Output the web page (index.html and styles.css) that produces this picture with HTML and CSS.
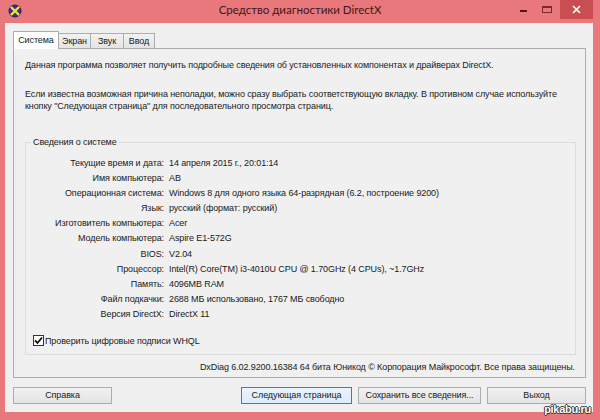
FILE: index.html
```html
<!DOCTYPE html>
<html lang="ru">
<head>
<meta charset="utf-8">
<title>Средство диагностики DirectX</title>
<link rel="stylesheet" href="styles.css">
</head>
<body>
<div class="window">
  <div class="titlebar">
    <svg class="appicon" width="14" height="14" viewBox="0 0 14 14">
      <circle cx="7" cy="7" r="6.5" fill="#2c2466"/>
      <circle cx="7" cy="7" r="5.5" fill="#3b3187"/>
      <path d="M3.5 3.5 L10.5 10.5 M10.5 3.5 L3.5 10.5" stroke="#f2e03a" stroke-width="2.4" stroke-linecap="round"/>
    </svg>
    <div class="title">Средство диагностики DirectX</div>
    <div class="controls">
      <div class="ctl min"><span class="minbar"></span></div>
      <div class="ctl max"><span class="maxbox"></span></div>
      <div class="ctl close">
        <svg width="9" height="9" viewBox="0 0 9 9"><path d="M1 1 L8 8 M8 1 L1 8" stroke="#fff" stroke-width="1.6"/></svg>
      </div>
    </div>
  </div>
  <div class="client">
    <div class="tabs">
      <div class="tab active">Система</div>
      <div class="tab">Экран</div>
      <div class="tab">Звук</div>
      <div class="tab">Ввод</div>
    </div>
    <div class="panel">
      <p class="intro">Данная программа позволяет получить подробные сведения об установленных компонентах и драйверах DirectX.</p>
      <p class="intro2">Если известна возможная причина неполадки, можно сразу выбрать соответствующую вкладку. В противном случае используйте<br>кнопку "Следующая страница" для последовательного просмотра страниц.</p>
      <div class="group">
        <div class="legend">Сведения о системе</div>
        <div class="rows">
          <div class="k">Текущие время и дата:</div><div class="v">14 апреля 2015 г., 20:01:14</div>
          <div class="k">Имя компьютера:</div><div class="v">AB</div>
          <div class="k">Операционная система:</div><div class="v">Windows 8 для одного языка 64-разрядная (6.2, построение 9200)</div>
          <div class="k">Язык:</div><div class="v">русский (формат: русский)</div>
          <div class="k">Изготовитель компьютера:</div><div class="v">Acer</div>
          <div class="k">Модель компьютера:</div><div class="v">Aspire E1-572G</div>
          <div class="k">BIOS:</div><div class="v">V2.04</div>
          <div class="k">Процессор:</div><div class="v">Intel(R) Core(TM) i3-4010U CPU @ 1.70GHz (4 CPUs), ~1.7GHz</div>
          <div class="k">Память:</div><div class="v">4096MB RAM</div>
          <div class="k">Файл подкачки:</div><div class="v">2688 МБ использовано, 1767 МБ свободно</div>
          <div class="k">Версия DirectX:</div><div class="v">DirectX 11</div>
        </div>
        <label class="check">
          <span class="box"><svg width="9" height="9" viewBox="0 0 9 9"><path d="M1 4.5 L3.5 7 L8 1.5" stroke="#111" stroke-width="1.8" fill="none"/></svg></span>
          Проверить цифровые подписи WHQL
        </label>
      </div>
      <div class="ver">DxDiag 6.02.9200.16384 64 бита Юникод © Корпорация Майкрософт. Все права защищены.</div>
    </div>
    <div class="buttons">
      <div class="btn help">Справка</div>
      <div class="spacer"></div>
      <div class="btn next">Следующая страница</div>
      <div class="btn save">Сохранить все сведения...</div>
      <div class="btn exit">Выход</div>
    </div>
  </div>
  <div class="watermark">pikabu.ru</div>
</div>
</body>
</html>
```
FILE: styles.css
```css
* { box-sizing: border-box; }
html, body { margin: 0; padding: 0; }
body {
  width: 600px;
  height: 420px;
  background: #e8787b;
  font-family: "Liberation Sans", Arial, sans-serif;
  font-size: 9px;
  letter-spacing: -0.1px;
  color: #1a1a1a;
  overflow: hidden;
}
.window {
  width: 600px;
  height: 420px;
  display: flex;
  flex-direction: column;
  background: #e8787b;
  position: relative;
}
.titlebar {
  height: 23px;
  display: grid;
  grid-template-columns: 1fr auto 1fr;
  align-items: start;
}
.appicon { margin: 4px 0 0 8px; }
.title {
  font-family: Lato, "Open Sans", sans-serif;
  font-size: 11.5px;
  letter-spacing: 0;
  color: #3e1719;
  padding-top: 3px;
}
.controls {
  display: flex;
  justify-self: end;
  margin-right: 7px;
}
.ctl {
  height: 19px;
  display: flex;
  align-items: center;
  justify-content: center;
}
.min { width: 22px; }
.max { width: 26px; }
.close { width: 33px; background: #c94d51; }
.minbar {
  width: 7px;
  height: 2px;
  background: #5a1416;
  margin-top: 3px;
}
.maxbox {
  width: 10px;
  height: 7px;
  border: 1px solid #7a2a2c;
  border-top-width: 2px;
}
.client {
  flex: 1;
  margin: 0 7px 8px 5px;
  background: #f0f0f0;
  display: flex;
  flex-direction: column;
  padding: 8px 7px 0 8px;
}
.tabs {
  display: flex;
  align-items: flex-end;
  height: 17px;
  position: relative;
  z-index: 1;
}
.tab {
  height: 15px;
  border: 1px solid #adadad;
  border-bottom: none;
  border-left: none;
  background: linear-gradient(#f2f2f2, #e3e3e3);
  line-height: 14px;
  text-align: center;
}
.tab:nth-child(2) { width: 32px; }
.tab:nth-child(3) { width: 33px; }
.tab:nth-child(4) { width: 31px; }
.tab.active {
  width: 46px;
  height: 18px;
  margin-bottom: -1px;
  background: #ffffff;
  border-left: 1px solid #adadad;
  line-height: 17px;
}
.panel {
  height: 330px;
  border: 1px solid #adadad;
  background: #f0f0f0;
  padding: 8px 10px 0 11px;
  display: flex;
  flex-direction: column;
}
.intro { margin: 2px 0 0; line-height: 13px; white-space: nowrap; }
.intro2 { margin: 16px 0 0; line-height: 12px; white-space: nowrap; }
.group {
  margin: 30px 0 0 0;
  height: 213px;
  border: 1px solid #dcdcdc;
  position: relative;
  padding: 13px 0 0 0;
  margin-right: -1px;
}
.legend {
  position: absolute;
  top: -7px;
  left: 5px;
  padding: 0 2px;
  background: #f0f0f0;
  line-height: 13px;
}
.rows {
  display: grid;
  grid-template-columns: 143px 1fr;
  grid-auto-rows: 15.1px;
  line-height: 15px;
}
.k { text-align: right; padding-right: 5px; white-space: nowrap; }
.v { white-space: nowrap; }
.check {
  display: flex;
  align-items: center;
  margin: 13px 0 0 7px;
  gap: 1px;
}
.box {
  width: 11px;
  height: 11px;
  border: 1px solid #333;
  background: #fff;
  display: flex;
  align-items: center;
  justify-content: center;
}
.ver {
  text-align: right;
  margin-top: 6px;
  line-height: 13px;
  white-space: nowrap;
}
.buttons {
  display: flex;
  margin-top: 9px;
  gap: 6px;
}
.spacer { flex: 1; }
.btn {
  height: 17px;
  border: 1px solid #adadad;
  background: linear-gradient(#f2f2f2, #e4e4e4);
  text-align: center;
  line-height: 15px;
  white-space: nowrap;
}
.help { width: 99px; }
.next { width: 111px; border-color: #3c7fb1; background: linear-gradient(#eaf4fc, #dcecfc); }
.save { width: 123px; }
.exit { width: 99px; }
.watermark {
  position: absolute;
  right: 9px;
  bottom: 5px;
  font-size: 11px;
  font-weight: bold;
  letter-spacing: -0.3px;
  color: #ffffff;
  text-shadow: 1px 0 0 #333, -1px 0 0 #333, 0 1px 0 #333, 0 -1px 0 #333;
}
```
